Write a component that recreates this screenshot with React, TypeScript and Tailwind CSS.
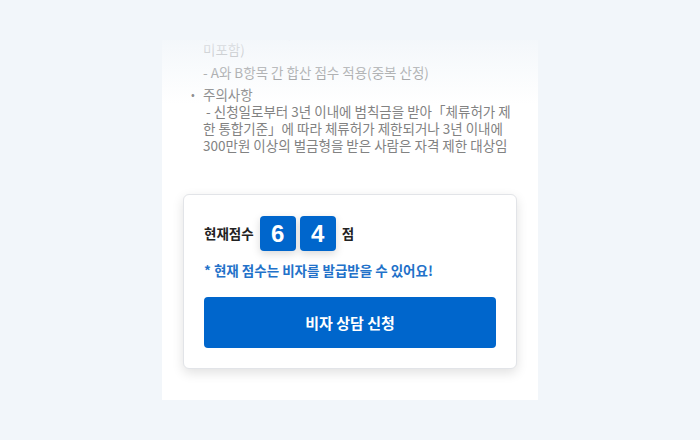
export default function App() {
  const score = [6, 4]

  return (
    <main
      className="min-h-screen w-full bg-[#f2f6fa] flex justify-center pt-[40px]"
      style={{ fontFamily: '"Noto Sans CJK KR", "Noto Sans", sans-serif' }}
    >
      <div className="relative w-[376px] h-[360px] bg-white overflow-hidden">
        {/* guide text, scrolled part way */}
        <div className="-mt-[16px] pl-[29px] pr-[16px] text-[13.5px] leading-[17px] text-[#828282]">
          <p className="pl-[12px]">(중복 적용 불가, 가산점 항목 일부</p>
          <p className="pl-[12px]">미포함)</p>
          <p className="pl-[12px] mt-[6px]">- A와 B항목 간 합산 점수 적용(중복 산정)</p>
          <ul className="mt-[5px]">
            <li className="flex">
              <span className="w-[12px] shrink-0 text-[11px]">•</span>
              <span>
                주의사항
                <br />
                &nbsp;- 신청일로부터 3년 이내에 범칙금을 받아「체류허가 제
                <br />
                한 통합기준」에 따라 체류허가 제한되거나 3년 이내에
                <br />
                300만원 이상의 벌금형을 받은 사람은 자격 제한 대상임
              </span>
            </li>
          </ul>
        </div>

        {/* top fade */}
        <div className="absolute inset-x-0 top-0 h-[64px] bg-gradient-to-b from-[#f2f6fae0] to-transparent pointer-events-none" />

        {/* score card */}
        <div className="mx-[21px] mt-[40px] rounded-[6px] border border-[#e2e4e8] bg-white shadow-[0_4px_12px_rgba(0,0,0,0.12)] px-[20px] pt-[21px] pb-[20px]">
          <div className="flex items-center">
            <span className="text-[13.5px] font-semibold text-[#222]">현재점수</span>
            <div className="flex gap-[4px] ml-[6px]">
              {score.map((n, i) => (
                <span
                  key={i}
                  className="w-[36px] h-[35px] rounded-[4px] bg-[#0066cc] text-white text-[24px] font-bold flex items-center justify-center shadow-[0_3px_8px_rgba(0,0,0,0.15)]"
                  style={{ fontFamily: '"Liberation Sans", Arial, sans-serif' }}
                >
                  {n}
                </span>
              ))}
            </div>
            <span className="ml-[6px] text-[13.5px] font-semibold text-[#222]">점</span>
          </div>

          <p className="mt-[9px] text-[13.5px] font-semibold text-[#2271c9]">
            * 현재 점수는 비자를 발급받을 수 있어요!
          </p>

          <button className="mt-[17px] w-full h-[51px] rounded-[4px] bg-[#0066cc] text-white text-[15px] font-bold">
            비자 상담 신청
          </button>
        </div>
      </div>
    </main>
  )
}
